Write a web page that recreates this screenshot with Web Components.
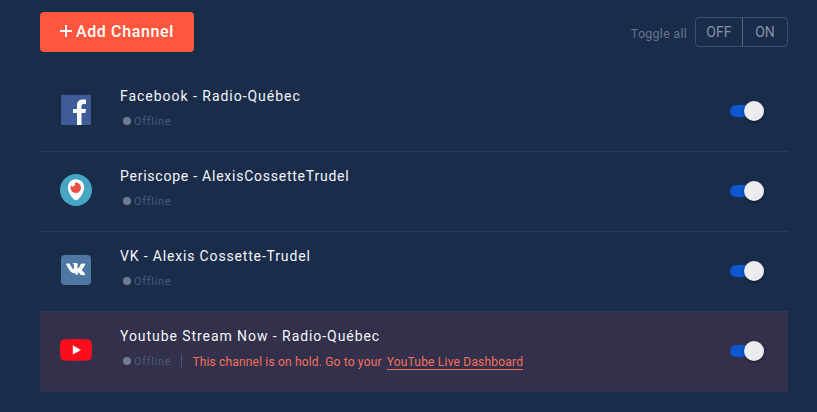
<!DOCTYPE html>
<html lang="en">
<head>
<meta charset="utf-8">
<title>Channels</title>
<style>
html,body{margin:0;height:100%;background:#192d4b;overflow:hidden}
body{font-family:Roboto,"Liberation Sans",sans-serif;color:#f4f5f8}
</style>
</head>
<body>
<channels-page></channels-page>
<script>
const icons = {
  facebook: `<svg width="32" height="32" viewBox="0 0 32 32"><rect x="1" y="1" width="30" height="30" rx="1" fill="#3f5c9a"/><path fill="#fff" d="M17 31V19H13V15h4V11.500C17 7.500 19.200 5.500 22.800 5.500c1.400 0 2.600.1 3.200.2V10h-2c-1.800 0-2.500.9-2.500 2.200V15H26L25.400 19H21.500V31z"/></svg>`,
  periscope: `<svg width="32" height="32" viewBox="0 0 32 32"><circle cx="16" cy="16" r="16" fill="#46a4c4"/><path fill="#fff" d="M16 5.200c4.700 0 8.200 3.600 8.200 8.200 0 5.300-5.900 12.900-8.200 12.900S7.800 18.700 7.800 13.400c0-4.600 3.500-8.200 8.200-8.200z"/><path fill="#e94f43" d="M14.800 8.700a5.200 5.200 0 1 1-3.600 2.700 2 2 0 1 0 3.600-2.700z"/></svg>`,
  vk: `<svg width="32" height="32" viewBox="0 0 32 32"><rect x="1" y="1" width="30" height="30" rx="4" fill="#4f76a3"/><path fill="#fff" d="M15.400 21.800h1.300s.4 0 .6-.3c.2-.2.2-.5.2-.5s0-1.900.8-2.100c.9-.3 2 1.800 3.200 2.600.9.600 1.600.4 1.600.4l2.700-.1s1.600-.1.800-1.400c-.1-.1-.5-1-2.400-2.800-2-1.900-1.800-1.600.7-4.900 1.500-2 2.100-3.200 1.900-3.700-.2-.5-1.300-.4-1.300-.4l-3.300.1c-.4 0-.7.200-.8.500 0 0-.5 1.400-1.200 2.600-1.500 2.500-2.100 2.600-2.300 2.500-.6-.4-.4-1.500-.4-2.300 0-2.500.4-3.500-.7-3.800-.4-.1-.7-.2-1.600-.2-1.300 0-2.400 0-3 .3-.4.200-.7.600-.5.700.2 0 .8.100 1.100.5.400.5.300 1.700.3 1.700s.3 3.200-.5 3.600c-.6.300-1.400-.3-3.100-3.200-.9-1.500-1.500-2.600-1.500-2.600-.1-.4-.4-.5-.8-.5H4.100s-.4 0-.6.200c-.2.200 0 .5 0 .5s2.500 5.500 5.200 8.300c2.600 2.700 6.700 2.600 6.700 2.600z" transform="translate(3.200 2.100) scale(.82 .87)"/></svg>`,
  youtube: `<svg width="32" height="32" viewBox="0 0 32 32"><path fill="#fc0d1b" d="M4 5.200Q16 4.600 28 5.200q3.200.3 3.600 3.600.8 7 0 14-.4 3.300-3.600 3.600-12 .8-24 0Q.8 26.100.4 22.800q-.8-7 0-14Q.8 5.500 4 5.200z"/><path fill="#fff" d="M12.800 11.200v9.400l8.200-4.700z"/></svg>`
};
function define(name, markup, setup) {
  const template = document.createElement('template');
  template.innerHTML = markup;
  customElements.define(name, class extends HTMLElement {
    constructor() {
      super();
      this.attachShadow({mode: 'open'}).append(template.content.cloneNode(true));
    }
    connectedCallback() { if (setup) setup(this); }
  });
}

define('service-icon', `<style>:host{display:block;width:32px;height:32px;flex:none}svg{display:block}</style><div></div>`,
  el => el.shadowRoot.querySelector('div').innerHTML = icons[el.getAttribute('name')] || '');

define('add-button', `<style>
:host{display:block}
button{display:flex;align-items:center;gap:4px;box-sizing:border-box;width:154px;height:40px;padding:0 0 1px 20px;border:0;border-radius:4px;background:#ff573d;color:#fff;font:500 16px/20px Roboto,sans-serif;letter-spacing:.62px;white-space:nowrap}
svg{display:block;margin-top:-1px}
</style><button><svg width="12" height="12"><path d="M6 0v12M0 6h12" stroke="#fff" stroke-width="2"/></svg><slot></slot></button>`);

define('toggle-all', `<style>
:host{display:flex;align-items:center;gap:8px;color:#68748a}
.label{font-size:12.500px;line-height:16px;letter-spacing:.25px;padding-top:4px}
.group{display:flex;box-sizing:border-box;width:93px;height:30px;border:1px solid #3e4e69;border-radius:4px;font-size:14px;line-height:28px;color:#8490a5;text-align:center}
.off{width:46px;border-right:1px solid #56647c;letter-spacing:.1px}
.on{flex:1}
</style><span class="label"><slot></slot></span><div class="group"><span class="off">OFF</span><span class="on">ON</span></div>`);

define('toggle-switch', `<style>
:host{display:flex;align-items:center;box-sizing:border-box;width:34px;height:20px}
.track{display:flex;align-items:center;justify-content:flex-end;width:34px;height:12px;border-radius:6px;background:#0d57cf}
.knob{width:20px;height:20px;border-radius:50%;background:#ebecf0;box-shadow:0 1px 3px rgba(0,0,0,.45)}
</style><div class="track"><div class="knob"></div></div>`);

define('status-label', `<style>
:host{display:flex;align-items:center;gap:3px;font-size:11px;line-height:16px;letter-spacing:.7px;color:#4b5b79}
i{width:8px;height:8px;border-radius:50%;background:#707c92}
span{padding-top:1px}
</style><i></i><span><slot></slot></span>`);

define('hold-notice', `<style>
:host{display:flex;align-items:center;font-size:12px;line-height:15px;color:#f5705d;white-space:nowrap}
.bar{width:1px;height:14px;background:#4a5470;margin:0 10px 0 10px}
a{color:inherit;text-decoration:none;border-bottom:1px solid #f5705d;margin-left:5px;letter-spacing:.2px;line-height:13px;padding-top:3px}
.text{letter-spacing:.17px;padding-top:2px}
</style><span class="bar"></span><span class="text"><slot></slot></span><a><slot name="link"></slot></a>`);

define('channel-row', `<style>
:host{display:flex;box-sizing:border-box;height:80px;padding:0 24px 0 20px;border-bottom:1px solid #243b5b}
:host([held]){background:#32304b;border-color:#2c3653}
service-icon{margin-top:22px}
.info{flex:1;margin-left:28px;padding-top:15px}
.name{font-size:14px;line-height:18px;letter-spacing:var(--track,1px);white-space:nowrap}
.status{display:flex;align-items:center;height:18px;margin:7px 0 0 3px}
toggle-switch{margin-top:29px}
</style><service-icon></service-icon><div class="info"><div class="name"><slot></slot></div><div class="status"><status-label>Offline</status-label><slot name="notice"></slot></div></div><toggle-switch></toggle-switch>`,
  el => {
    const old = el.shadowRoot.querySelector('service-icon');
    const icon = document.createElement('service-icon');
    icon.setAttribute('name', el.getAttribute('service'));
    old.replaceWith(icon);
  });

define('channels-page', `<style>
:host{display:block;box-sizing:border-box;width:817px;height:412px;padding:12px 29px 0 40px}
header{display:flex;justify-content:space-between;align-items:center;height:40px;margin-bottom:20px}
</style>
<header><add-button>Add Channel</add-button><toggle-all>Toggle all</toggle-all></header>
<main>
<channel-row service="facebook" style="--track:.97px">Facebook - Radio-Québec</channel-row>
<channel-row service="periscope" style="--track:.76px">Periscope - AlexisCossetteTrudel</channel-row>
<channel-row service="vk" style="--track:.84px">VK - Alexis Cossette-Trudel</channel-row>
<channel-row service="youtube" held style="--track:.94px">Youtube Stream Now - Radio-Québec<hold-notice slot="notice">This channel is on hold. Go to your<span slot="link">YouTube Live Dashboard</span></hold-notice></channel-row>
</main>`);
</script>
</body>
</html>
